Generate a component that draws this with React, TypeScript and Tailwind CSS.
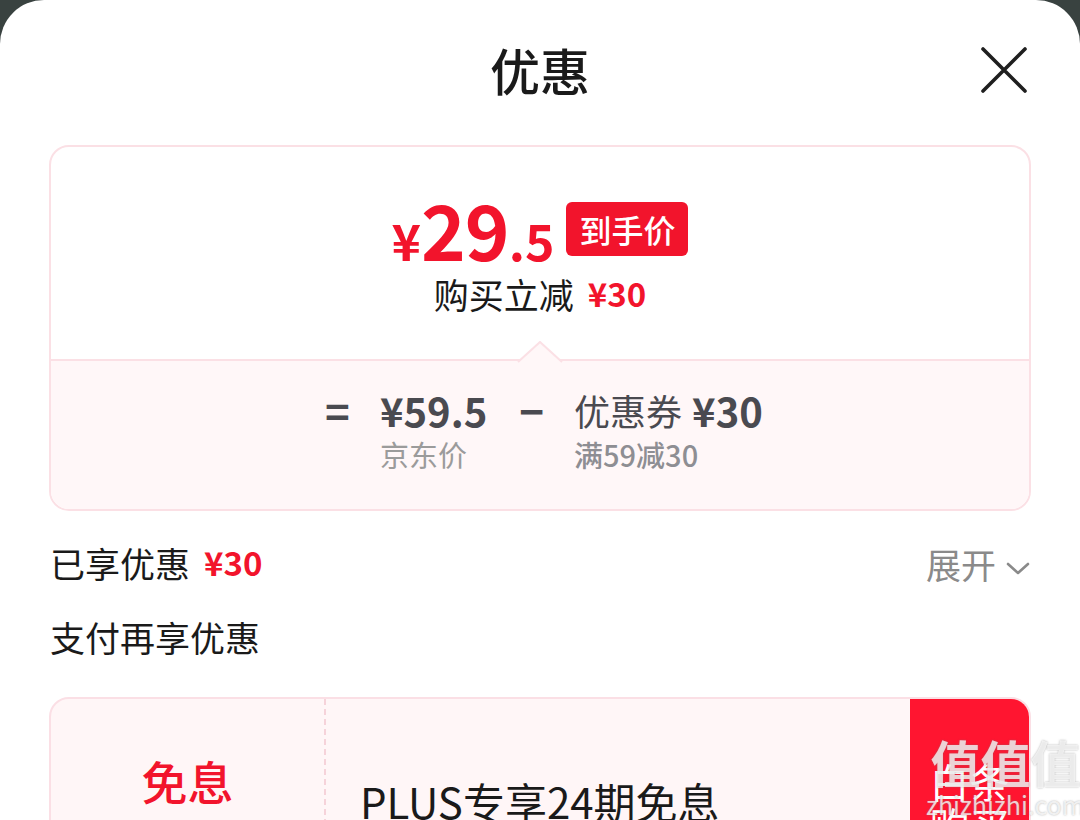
import React from "react";

const font = { fontFamily: '"Noto Sans CJK SC", "Noto Sans", sans-serif' };

function CloseIcon() {
  return (
    <svg width="48" height="48" viewBox="0 0 48 48" fill="none">
      <path d="M3 3 L45 45 M45 3 L3 45" stroke="#1f1f1f" strokeWidth="3.6" strokeLinecap="round" />
    </svg>
  );
}

function Notch() {
  return (
    <svg width="48" height="22" viewBox="0 0 48 22" className="absolute left-1/2 -translate-x-1/2 top-[-20px]">
      <path d="M2 21 L24 1 L46 21 Z" fill="#fff7f8" />
      <path d="M2 21 L24 1 L46 21" stroke="#fbe0e5" strokeWidth="2" fill="none" />
    </svg>
  );
}

function Chevron() {
  return (
    <svg width="24" height="14" viewBox="0 0 24 14" fill="none" className="mt-[12px]">
      <path d="M2 2 L12 11 L22 2" stroke="#8a8a8a" strokeWidth="2.6" strokeLinecap="round" strokeLinejoin="round" />
    </svg>
  );
}

export default function App() {
  return (
    <div className="relative w-[1080px] h-[820px] bg-[#394240] overflow-hidden" style={font}>
      <div className="bg-white h-full rounded-t-[44px] flex flex-col">
        {/* Header */}
        <div className="h-[145px] shrink-0 grid grid-cols-[1fr_auto_1fr] items-center">
          <div />
          <h1 className="text-[50px] leading-none text-[#1a1a1a] font-medium pb-[8px]">优惠</h1>
          <div className="flex justify-end pr-[52px] pb-[5px]">
            <CloseIcon />
          </div>
        </div>

        {/* Price card */}
        <div className="mx-[49px] shrink-0 border-2 border-[#fbe0e5] rounded-[20px] overflow-hidden flex flex-col">
          <div className="h-[212px] flex flex-col items-center pt-[43px]">
            <div className="flex items-end h-[76px]">
              <div className="flex items-baseline text-[#f2142c] font-bold leading-none">
                <span className="text-[50px]">¥</span>
                <span className="text-[76px] tracking-[-1px]">29</span>
                <span className="text-[50px]">.5</span>
              </div>
              <div className="ml-[12px] mb-[10px] h-[54px] px-[13px] bg-[#f2142c] rounded-[6px] flex items-center text-white text-[32px] font-medium leading-none">
                到手价
              </div>
            </div>
            <div className="mt-[7px] h-[40px] flex items-center gap-[14px] text-[35px] leading-none">
              <span className="text-[#1a1a1a]">购买立减</span>
              <span className="text-[#f2142c] font-bold text-[33px]">¥30</span>
            </div>
          </div>

          <div className="relative h-[150px] bg-[#fff7f8] border-t-2 border-[#fbe0e5] flex justify-center pt-[25px]">
            <Notch />
            <div className="flex items-start text-[#4a4a50] ml-[8px]">
              <div className="h-[48px] flex items-center text-[42px] font-bold leading-none">=</div>
              <div className="ml-[30px] flex flex-col">
                <div className="h-[48px] flex items-center text-[40px] font-semibold leading-none">¥59.5</div>
                <div className="mt-[2px] h-[36px] flex items-center text-[29px] text-[#9b9b9b] leading-none">京东价</div>
              </div>
              <div className="ml-[32px] h-[48px] flex items-center text-[42px] font-bold leading-none">−</div>
              <div className="ml-[30px] flex flex-col">
                <div className="h-[48px] flex items-center gap-[10px] leading-none">
                  <span className="text-[36px]">优惠券</span>
                  <span className="text-[40px] font-semibold">¥30</span>
                </div>
                <div className="mt-[2px] h-[36px] flex items-center text-[29px] text-[#8e8e93] font-medium leading-none">满59减30</div>
              </div>
            </div>
          </div>
        </div>

        {/* Discount rows */}
        <div className="mx-[50px] mt-[27px] h-[48px] flex items-center justify-between shrink-0">
          <div className="flex items-center gap-[14px] leading-none">
            <span className="text-[35px] text-[#1a1a1a]">已享优惠</span>
            <span className="text-[33px] font-bold text-[#f2142c]">¥30</span>
          </div>
          <div className="flex items-center gap-[10px] pt-[2px]">
            <span className="text-[35px] text-[#8a8a8a] leading-none">展开</span>
            <Chevron />
          </div>
        </div>
        <div className="mx-[50px] mt-[26px] h-[48px] flex items-center text-[35px] text-[#1a1a1a] leading-none shrink-0">
          支付再享优惠
        </div>

        {/* Installment card */}
        <div className="relative mx-[49px] mt-[37px] h-[200px] shrink-0 bg-[#fff6f7] border-2 border-[#fbdfe5] rounded-[20px] overflow-hidden flex">
          <div className="w-[275px] shrink-0 border-r-2 border-dashed border-[#f6d3da] flex justify-center pt-[58px]">
            <span className="text-[46px] text-[#f2142c] font-medium leading-none">免息</span>
          </div>
          <div className="flex-1 pl-[34px] pt-[81px]">
            <span className="text-[42px] text-[#1a1a1a] leading-none">PLUS专享24期免息</span>
          </div>
          <div className="w-[119px] shrink-0 bg-[#ff1530] flex flex-col items-center pt-[60px] text-white text-[40px] leading-[44px]">
            <span>白条</span>
            <span>购买</span>
          </div>
        </div>
      </div>

      {/* watermark */}
      <div className="absolute left-[926px] top-[736px] flex flex-col items-center pointer-events-none">
        <span className="text-[50px] leading-none text-white/75 font-bold [text-shadow:0_0_2px_rgba(120,120,120,0.6)]">值值值</span>
        <span className="text-[25px] leading-none mt-[6px] text-white/75 [text-shadow:0_0_2px_rgba(120,120,120,0.6)]">zhizhizhi.com</span>
      </div>
    </div>
  );
}
